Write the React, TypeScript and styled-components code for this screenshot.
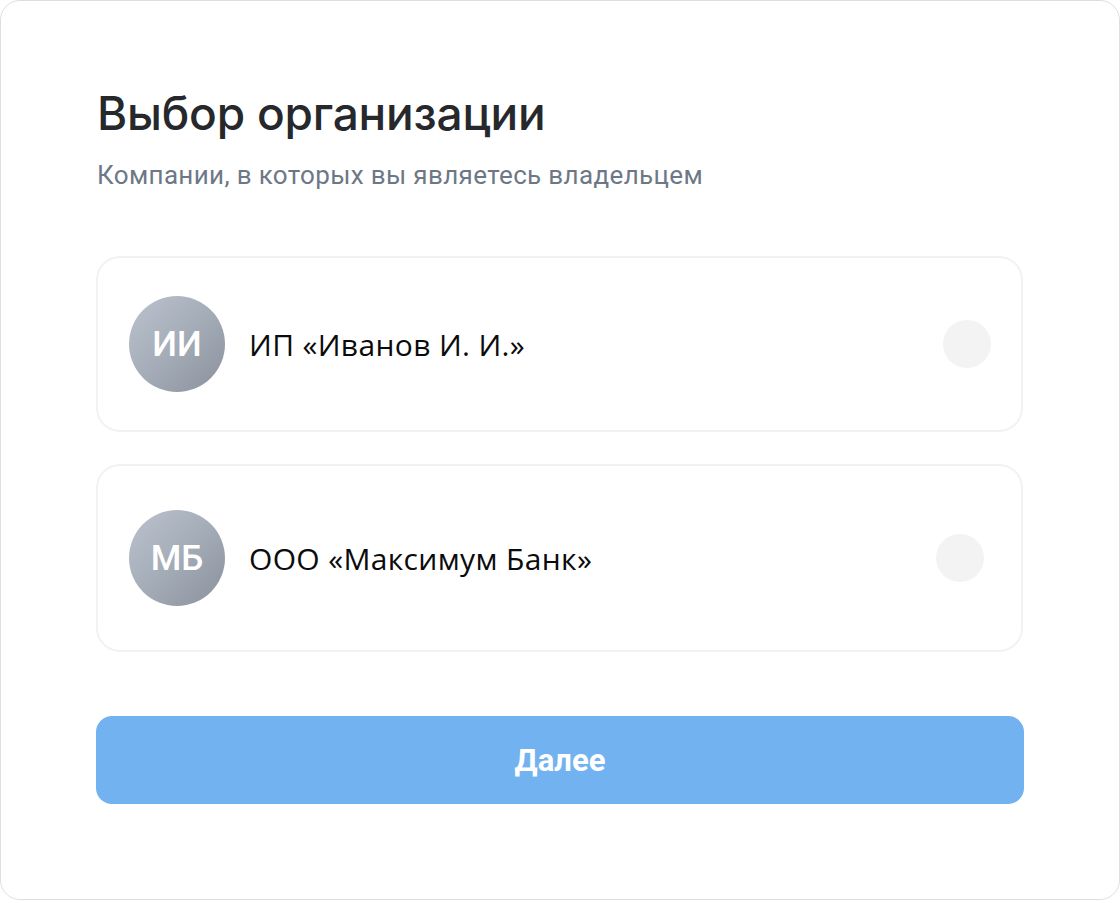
import React from "react";
import styled, { createGlobalStyle } from "styled-components";

const Global = createGlobalStyle`
  html, body { margin: 0; padding: 0; background: #ffffff; }
  * { box-sizing: border-box; }
`;

const Frame = styled.div`
  width: 1120px;
  height: 900px;
  border: 1px solid #dedfe2;
  border-radius: 20px;
  background: #ffffff;
  padding: 84px 96px 0 95px;
  display: flex;
  flex-direction: column;
`;

const Title = styled.h1`
  margin: 0 0 0 1px;
  font-family: Inter, "Noto Sans", sans-serif;
  font-weight: 500;
  font-size: 46px;
  line-height: 56px;
  color: #26282b;
  letter-spacing: -0.2px;
`;

const Subtitle = styled.p`
  margin: 20px 0 0 1px;
  font-family: Roboto, "Noto Sans", sans-serif;
  font-size: 26px;
  line-height: 28px;
  letter-spacing: 0.35px;
  color: #6d7887;
`;

const List = styled.div`
  margin-top: 67px;
  display: flex;
  flex-direction: column;
  gap: 32px;
`;

const Row = styled.div<{ $vpad: number; $rpad: number }>`
  display: flex;
  align-items: center;
  gap: 24px;
  border: 2px solid #f2f2f3;
  border-radius: 24px;
  padding: ${(p) => p.$vpad}px ${(p) => p.$rpad}px ${(p) => p.$vpad}px 31px;
`;

const Avatar = styled.div`
  width: 96px;
  height: 96px;
  border-radius: 50%;
  flex-shrink: 0;
  background: linear-gradient(135deg, #bcc3ce 0%, #a4acb8 50%, #8a919c 100%);
  display: flex;
  align-items: center;
  justify-content: center;
  font-family: Roboto, sans-serif;
  font-weight: 500;
  font-size: 35px;
  color: #ffffff;
`;

const Name = styled.div`
  flex: 1;
  font-family: "Open Sans", "Noto Sans", sans-serif;
  font-size: 30px;
  letter-spacing: 0.35px;
  color: #0b0b0c;
`;

const Radio = styled.div`
  width: 48px;
  height: 48px;
  border-radius: 50%;
  background: #f3f3f4;
  flex-shrink: 0;
`;

const Button = styled.button`
  margin-top: 64px;
  height: 88px;
  width: 928px;
  border: none;
  border-radius: 16px;
  background: #73b2f0;
  color: #ffffff;
  font-family: Roboto, sans-serif;
  font-weight: 700;
  font-size: 31px;
  cursor: pointer;
`;

const orgs = [
  { initials: "ИИ", name: "ИП «Иванов И. И.»", vpad: 38, rpad: 30 },
  { initials: "МБ", name: "ООО «Максимум Банк»", vpad: 44, rpad: 37 },
];

export default function App() {
  return (
    <>
      <Global />
      <Frame>
        <Title>Выбор организации</Title>
        <Subtitle>Компании, в которых вы являетесь владельцем</Subtitle>
        <List>
          {orgs.map((o) => (
            <Row key={o.name} $vpad={o.vpad} $rpad={o.rpad}>
              <Avatar>{o.initials}</Avatar>
              <Name>{o.name}</Name>
              <Radio />
            </Row>
          ))}
        </List>
        <Button>Далее</Button>
      </Frame>
    </>
  );
}
